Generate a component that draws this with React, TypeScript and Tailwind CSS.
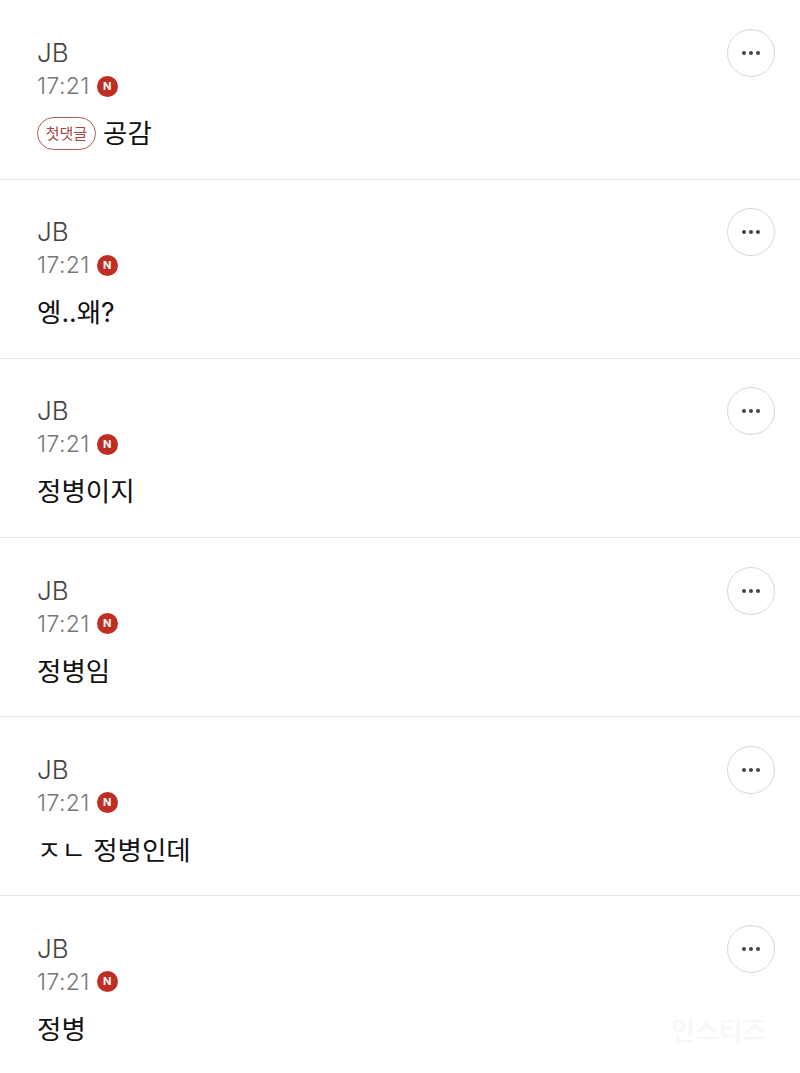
const comments = [
  { id: 1, text: '공감', first: true },
  { id: 2, text: '엥..왜?' },
  { id: 3, text: '정병이지' },
  { id: 4, text: '정병임' },
  { id: 5, text: 'ㅈㄴ 정병인데' },
  { id: 6, text: '정병' },
];

function NewBadge() {
  return (
    <span className="flex h-[21px] w-[21px] items-center justify-center rounded-full bg-[#bf2e22] text-[11px] font-bold leading-none text-white">
      N
    </span>
  );
}

function MoreButton() {
  return (
    <button
      type="button"
      className="flex h-[48px] w-[48px] items-center justify-center gap-[3.3px] rounded-full border border-[#d8d8d8] bg-white"
      aria-label="more"
    >
      <span className="h-[4px] w-[4px] rounded-full bg-[#444]" />
      <span className="h-[4px] w-[4px] rounded-full bg-[#444]" />
      <span className="h-[4px] w-[4px] rounded-full bg-[#444]" />
    </button>
  );
}

function Comment({ text, first }: { text: string; first?: boolean }) {
  return (
    <div className="flex h-[179.2px] items-start justify-between border-b border-[#e6e6e6] pl-[37px] pr-[25px]">
      <div className="pt-[36.5px]">
        <div className="h-[32px] text-[26px] font-[350] leading-[32px] text-[#444]">JB</div>
        <div className="mt-[1px] flex h-[32px] items-center gap-[7px]">
          <span className="text-[23px] font-[350] leading-[32px] tracking-[0.4px] text-[#777]">17:21</span>
          <NewBadge />
        </div>
        <div className="mt-[11px] flex h-[40px] items-center gap-[7px]">
          {first && (
            <span className="flex h-[33px] w-[59px] items-center justify-center rounded-full border border-[#ac5a55] text-[15px] leading-none text-[#a8453f]">
              첫댓글
            </span>
          )}
          <span className="text-[26.5px] leading-[40px] text-[#111]">{text}</span>
        </div>
      </div>
      <div className="pt-[28.5px]">
        <MoreButton />
      </div>
    </div>
  );
}

export default function App() {
  return (
    <div className="relative h-[1073px] w-[800px] overflow-hidden bg-white pt-[0.5px] font-['Inter','Noto_Sans_CJK_KR',sans-serif]">
      {comments.map((c) => (
        <Comment key={c.id} text={c.text} first={c.first} />
      ))}
      <span className="absolute left-[671px] top-[1018px] text-[26px] font-medium leading-none text-[#f7f7f7]">
        인스티즈
      </span>
    </div>
  );
}
